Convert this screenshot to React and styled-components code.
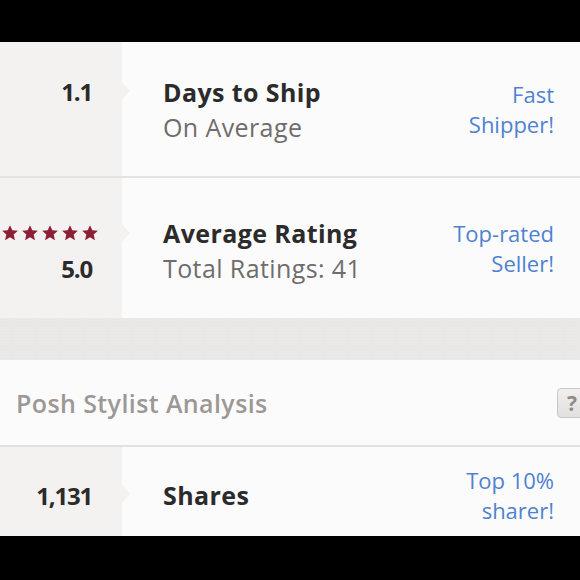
import React from "react";
import styled, { createGlobalStyle } from "styled-components";

const Global = createGlobalStyle`
  html, body { margin: 0; padding: 0; background: #000; }
  body { font-family: "Open Sans", Lato, Arial, sans-serif; }
`;

const Screen = styled.div`
  width: 580px;
  height: 580px;
  display: flex;
  flex-direction: column;
  background: #000;
  overflow: hidden;
`;

const Letterbox = styled.div`
  flex: 0 0 ${(p) => p.h}px;
  background: #000;
`;

const Content = styled.div`
  flex: 1;
  overflow: hidden;
  display: flex;
  flex-direction: column;
  background: #fcfbfb;
`;

const Row = styled.div`
  flex: 0 0 ${(p) => p.h}px;
  display: flex;
  border-bottom: ${(p) => (p.divider ? "2px solid #e5e3e2" : "none")};
`;

const Left = styled.div`
  position: relative;
  width: 122px;
  flex: 0 0 122px;
  background: #f4f2f0;
  display: flex;
  flex-direction: column;
  justify-content: center;
  align-items: flex-end;
  padding-right: 30px;
  padding-top: ${(p) => p.shift || 0}px;
  box-sizing: border-box;
`;

const Pointer = styled.div`
  position: absolute;
  right: -8px;
  top: ${(p) => p.top}px;
  width: 0;
  height: 0;
  border-top: 9px solid transparent;
  border-bottom: 9px solid transparent;
  border-left: 8px solid #f4f2f0;
`;

const Line = styled.div`
  height: 35px;
  display: flex;
  align-items: center;
  justify-content: flex-end;
`;

const Num = styled.span`
  font-size: 24px;
  font-weight: 700;
  color: #2b2b2b;
  letter-spacing: -1.2px;
`;

const Stars = styled.div`
  display: flex;
  gap: 2px;
  margin-right: -7px;
`;

const Middle = styled.div`
  flex: 1;
  display: flex;
  flex-direction: column;
  justify-content: center;
  padding-left: 41px;
  padding-top: ${(p) => p.shift || 0}px;
`;

const TextLine = styled.div`
  height: 35px;
  display: flex;
  align-items: center;
  font-size: 25px;
  font-weight: ${(p) => (p.bold ? 700 : 400)};
  color: ${(p) => (p.bold ? "#2b2b2b" : "#6f6d6c")};
  letter-spacing: ${(p) => (p.bold ? "0.4px" : "0.4px")};
  white-space: nowrap;
`;

const Badge = styled.div`
  display: flex;
  flex-direction: column;
  justify-content: center;
  align-items: flex-end;
  padding-right: 26px;
  color: #4f82d0;
  font-size: 22px;
  line-height: 30px;
  text-align: right;
`;

const Band = styled.div`
  flex: 0 0 42px;
  background: #ebe9e7;
  background-image: radial-gradient(rgba(0, 0, 0, 0.025) 1px, transparent 1px);
  background-size: 3px 3px;
`;

const Header = styled.div`
  flex: 0 0 85px;
  display: flex;
  align-items: center;
  justify-content: space-between;
  padding-left: 16px;
  border-bottom: 2px solid #e3e1e0;
  background: #fcfbfb;
  overflow: hidden;
`;

const HeaderTitle = styled.div`
  font-size: 25px;
  font-weight: 600;
  letter-spacing: 0.4px;
  color: #9c9896;
`;

const Help = styled.div`
  width: 28px;
  height: 28px;
  margin-right: -7px;
  border: 1px solid #c9c6c3;
  border-radius: 4px;
  background: linear-gradient(#f1efed, #e2e0de);
  display: flex;
  align-items: center;
  justify-content: center;
  font-size: 21px;
  font-weight: 700;
  color: #8d8a88;
  flex-shrink: 0;
`;

const Star = () => (
  <svg width="18" height="18" viewBox="0 0 24 24">
    <path
      d="M12 1.5l3.1 6.9 7.4.7-5.6 5 1.7 7.4L12 17.6l-6.6 3.9 1.7-7.4-5.6-5 7.4-.7z"
      fill="#8c1f36"
    />
  </svg>
);

export default function App() {
  return (
    <>
      <Global />
      <Screen>
        <Letterbox h={42} />
        <Content>
          <Row h={134} divider>
            <Left shift={-2}>
              <Pointer top={40} />
              <Line><Num>1.1</Num></Line>
              <Line />
            </Left>
            <Middle shift={-2}>
              <TextLine bold>Days to Ship</TextLine>
              <TextLine>On Average</TextLine>
            </Middle>
            <Badge>
              <div>Fast</div>
              <div>Shipper!</div>
            </Badge>
          </Row>
          <Row h={140}>
            <Left shift={5}>
              <Pointer top={46} />
              <Line>
                <Stars>
                  <Star />
                  <Star />
                  <Star />
                  <Star />
                  <Star />
                </Stars>
              </Line>
              <Line><Num>5.0</Num></Line>
            </Left>
            <Middle shift={5}>
              <TextLine bold>Average Rating</TextLine>
              <TextLine>Total Ratings: 41</TextLine>
            </Middle>
            <Badge>
              <div>Top-rated</div>
              <div>Seller!</div>
            </Badge>
          </Row>
          <Band />
          <Header>
            <HeaderTitle>Posh Stylist Analysis</HeaderTitle>
            <Help>?</Help>
          </Header>
          <Row h={96}>
            <Left>
              <Pointer top={38} />
              <Line><Num>1,131</Num></Line>
            </Left>
            <Middle>
              <TextLine bold>Shares</TextLine>
            </Middle>
            <Badge>
              <div>Top 10%</div>
              <div>sharer!</div>
            </Badge>
          </Row>
        </Content>
        <Letterbox h={44} />
      </Screen>
    </>
  );
}
